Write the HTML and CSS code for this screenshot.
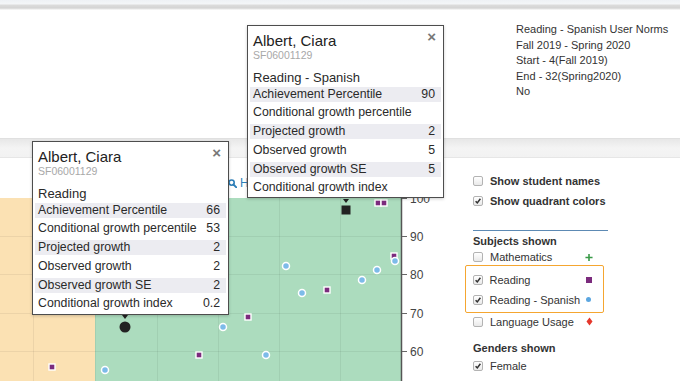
FILE: index.html
```html
<!DOCTYPE html>
<html>
<head>
<meta charset="utf-8">
<link rel="stylesheet" href="styles.css">
</head>
<body>
<div class="page">
  <div class="topstrip"></div>
  <section class="summary">
    <div>Reading - Spanish User Norms</div>
    <div>Fall 2019 - Spring 2020</div>
    <div>Start - 4(Fall 2019)</div>
    <div>End - 32(Spring2020)</div>
    <div>No</div>
  </section>
  <div class="band"></div>
  <main class="main">
    <div class="chart-col">
      <div class="toolbar">
        <a class="zoom-link"><svg width="9" height="9" viewBox="0 0 9 9"><circle cx="3.6" cy="3.6" r="2.6" fill="none" stroke="#2e7fb8" stroke-width="1.6"/><line x1="5.5" y1="5.5" x2="8.3" y2="8.3" stroke="#2e7fb8" stroke-width="1.8" stroke-linecap="round"/></svg><span class="zoom-text">H</span></a>
      </div>
      <svg class="plot" width="440" height="183" viewBox="0 0 440 183">
        <rect x="0" y="0" width="95" height="183" fill="#fbe1b3"/>
        <rect x="95" y="0" width="306" height="183" fill="#acdcbe"/>
        <g stroke="#000" stroke-opacity="0.06" stroke-width="1">
          <line x1="33.5" y1="0" x2="33.5" y2="183"/>
          <line x1="95.5" y1="0" x2="95.5" y2="183"/>
          <line x1="157.5" y1="0" x2="157.5" y2="183"/>
          <line x1="218.5" y1="0" x2="218.5" y2="183"/>
          <line x1="279.5" y1="0" x2="279.5" y2="183"/>
          <line x1="340.5" y1="0" x2="340.5" y2="183"/>
          <line x1="0" y1="38.5" x2="401" y2="38.5"/>
          <line x1="0" y1="76.5" x2="401" y2="76.5"/>
          <line x1="0" y1="115.5" x2="401" y2="115.5"/>
          <line x1="0" y1="153.5" x2="401" y2="153.5"/>
        </g>
        <line x1="401.5" y1="0" x2="401.5" y2="183" stroke="#555" stroke-width="1.5"/>
        <g stroke="#666" stroke-width="1">
          <line x1="402" y1="0.5" x2="407" y2="0.5"/>
          <line x1="402" y1="38.5" x2="407" y2="38.5"/>
          <line x1="402" y1="76.5" x2="407" y2="76.5"/>
          <line x1="402" y1="115.5" x2="407" y2="115.5"/>
          <line x1="402" y1="153.5" x2="407" y2="153.5"/>
        </g>
        <g font-family="Liberation Sans, Arial, sans-serif" font-size="12" fill="#444">
          <text x="410" y="4.5">100</text>
          <text x="410" y="42.5">90</text>
          <text x="410" y="80.5">80</text>
          <text x="410" y="119.5">70</text>
          <text x="410" y="157.5">60</text>
        </g>
        <g fill="#7b2b7d" stroke="#fff" stroke-width="1.4">
          <rect x="375" y="2" width="6" height="6"/>
          <rect x="381" y="2" width="6" height="6"/>
          <rect x="391" y="55" width="6" height="6"/>
          <rect x="324" y="89" width="6" height="6"/>
          <rect x="245" y="116" width="6" height="6"/>
          <rect x="196" y="154" width="6" height="6"/>
          <rect x="49" y="166" width="6" height="6"/>
        </g>
        <g fill="#7dbbe9" stroke="#fff" stroke-width="1.5">
          <circle cx="286" cy="68" r="3.5"/>
          <circle cx="302" cy="95" r="3.5"/>
          <circle cx="362" cy="82" r="3.5"/>
          <circle cx="377" cy="72" r="3.5"/>
          <circle cx="395" cy="63" r="3.5"/>
          <circle cx="266" cy="157" r="3.5"/>
          <circle cx="223" cy="129" r="3.5"/>
          <circle cx="105" cy="172" r="3.5"/>
        </g>
        <rect x="341.5" y="7.5" width="9" height="9" fill="#222"/>
        <circle cx="125" cy="129" r="5.5" fill="#222"/>
        <polygon points="343,1 349,1 346,5" fill="#222"/>
        <polygon points="122,117 128,117 125,121" fill="#222"/>
      </svg>
    </div>
    <aside class="legend">
      <div class="opt"><span class="cb"></span>Show student names</div>
      <div class="opt"><span class="cb"><svg width="8" height="8" viewBox="0 0 8 8"><path d="M1.6 4.2 L3.3 5.9 L6.4 1.8" fill="none" stroke="#333" stroke-width="1.5"/></svg></span>Show quadrant colors</div>
      <div class="rule"></div>
      <div class="heading">Subjects shown</div>
      <div class="item math"><span class="cb"></span><span class="label">Mathematics</span><span class="sym"><svg width="9" height="9" viewBox="0 0 9 9"><path d="M4.5 0.5 V8.5 M0.5 4.5 H8.5" stroke="#3a9a48" stroke-width="1.8"/></svg></span></div>
      <div class="hl">
        <div class="item"><span class="cb"><svg width="8" height="8" viewBox="0 0 8 8"><path d="M1.6 4.2 L3.3 5.9 L6.4 1.8" fill="none" stroke="#333" stroke-width="1.5"/></svg></span><span class="label">Reading</span><span class="sym"><span class="sq"></span></span></div>
        <div class="item"><span class="cb"><svg width="8" height="8" viewBox="0 0 8 8"><path d="M1.6 4.2 L3.3 5.9 L6.4 1.8" fill="none" stroke="#333" stroke-width="1.5"/></svg></span><span class="label">Reading - Spanish</span><span class="sym"><span class="dot"></span></span></div>
      </div>
      <div class="item lang"><span class="cb"></span><span class="label">Language Usage</span><span class="sym"><svg width="7" height="9" viewBox="0 0 7 9"><polygon points="3.5,0.5 6.5,4.5 3.5,8.5 0.5,4.5" fill="#e5372c"/></svg></span></div>
      <div class="heading genders">Genders shown</div>
      <div class="item female"><span class="cb"><svg width="8" height="8" viewBox="0 0 8 8"><path d="M1.6 4.2 L3.3 5.9 L6.4 1.8" fill="none" stroke="#333" stroke-width="1.5"/></svg></span><span class="label">Female</span></div>
    </aside>
  </main>

  <div class="popup popup-top">
    <span class="close">×</span>
    <div class="pname">Albert, Ciara</div>
    <div class="pid">SF06001129</div>
    <div class="psubj">Reading - Spanish</div>
    <div class="prow shade"><span>Achievement Percentile</span><span>90</span></div>
    <div class="prow"><span>Conditional growth percentile</span><span></span></div>
    <div class="prow shade"><span>Projected growth</span><span>2</span></div>
    <div class="prow"><span>Observed growth</span><span>5</span></div>
    <div class="prow shade"><span>Observed growth SE</span><span>5</span></div>
    <div class="prow"><span>Conditional growth index</span><span></span></div>
  </div>

  <div class="popup popup-left">
    <span class="close">×</span>
    <div class="pname">Albert, Ciara</div>
    <div class="pid">SF06001129</div>
    <div class="psubj">Reading</div>
    <div class="prow shade"><span>Achievement Percentile</span><span>66</span></div>
    <div class="prow"><span>Conditional growth percentile</span><span>53</span></div>
    <div class="prow shade"><span>Projected growth</span><span>2</span></div>
    <div class="prow"><span>Observed growth</span><span>2</span></div>
    <div class="prow shade"><span>Observed growth SE</span><span>2</span></div>
    <div class="prow"><span>Conditional growth index</span><span>0.2</span></div>
  </div>
</div>
</body>
</html>
```

FILE: styles.css
```css
html, body {
  margin: 0;
  padding: 0;
}
body {
  font-family: "Liberation Sans", Arial, sans-serif;
  color: #333;
  background: #fff;
}
.page {
  position: relative;
  width: 680px;
  height: 381px;
  overflow: hidden;
  background: #fff;
}
.topstrip {
  height: 10px;
  background: linear-gradient(#eef1f5 0, #f4f6f8 4px, #dcdcdc 5px, #d4d4d4 8px, #e8e8e8 9px, #fdfdfd 10px);
}
.summary {
  height: 128px;
  box-sizing: border-box;
  padding: 12.3px 0 0 516px;
  font-size: 11px;
  line-height: 15.4px;
  color: #333;
}
.band {
  height: 18px;
  border-top: 1px solid #e0e0e0;
  border-bottom: 1px solid #e6e6e6;
  background: linear-gradient(#e7e7e7, #f4f4f4 50%, #f2f2f2);
}
.main {
  display: flex;
  height: 223px;
}
.chart-col {
  width: 465px;
  flex: none;
  display: flex;
  flex-direction: column;
}
.toolbar {
  height: 40px;
  box-sizing: border-box;
  display: flex;
  align-items: flex-end;
  padding: 0 0 8px 228px;
}
.zoom-link {
  display: flex;
  align-items: center;
  gap: 3px;
  color: #2e7fb8;
  font-size: 12px;
  line-height: 14px;
}
.plot {
  display: block;
  overflow: visible;
}
.legend {
  display: flex;
  flex-direction: column;
  padding: 13px 0 0 8px;
  font-size: 11px;
  color: #333;
}
.cb {
  width: 10px;
  height: 10px;
  box-sizing: border-box;
  border: 1px solid #b3b3b3;
  border-radius: 2px;
  background: linear-gradient(#ffffff, #e9e9e9);
  flex: none;
  display: flex;
  align-items: center;
  justify-content: center;
}
.cb svg {
  display: block;
}
.opt {
  height: 20px;
  display: flex;
  align-items: center;
  gap: 7px;
  font-weight: bold;
  white-space: nowrap;
}
.rule {
  width: 135px;
  margin-top: 19px;
  border-top: 1.5px solid #5d8ab4;
}
.heading {
  margin-top: 3px;
  height: 15px;
  line-height: 15px;
  font-weight: bold;
}
.genders {
  margin-top: 11px;
}
.item {
  display: flex;
  align-items: center;
  width: 120px;
  white-space: nowrap;
}
.item .cb {
  margin-right: 7px;
}
.item .label {
  flex: 1;
}
.sym {
  width: 8px;
  flex: none;
  display: flex;
  justify-content: center;
  align-items: center;
}
.sym svg {
  display: block;
}
.sq {
  width: 6px;
  height: 6px;
  background: #7b2b7d;
}
.dot {
  width: 5px;
  height: 5px;
  border-radius: 50%;
  background: #5ba6e0;
}
.math {
  height: 16px;
}
.hl {
  align-self: flex-start;
  margin-left: -8px;
  border: 1.5px solid #f5a630;
  border-radius: 2px;
  padding: 3.5px 10.5px 2.5px 6.5px;
}
.hl .item {
  height: 20px;
}
.lang {
  height: 17px;
}
.female {
  height: 19px;
}
.popup {
  position: absolute;
  width: 197px;
  box-sizing: border-box;
  border: 1px solid #4d4d4d;
  background: #fff;
  padding: 7px 2px 2px;
  box-shadow: 0 1px 3px rgba(0, 0, 0, 0.2);
  color: #2a2a2a;
  z-index: 2;
}
.popup-top {
  left: 247px;
  top: 25px;
  height: 173px;
}
.popup-left {
  left: 32px;
  top: 141px;
  height: 174px;
}
.close {
  position: absolute;
  right: 7px;
  top: 3px;
  font-size: 15px;
  line-height: 15px;
  font-weight: bold;
  color: #777;
}
.pname {
  font-size: 15px;
  line-height: 16px;
  padding-left: 3px;
  color: #222;
}
.pid {
  font-size: 10.5px;
  line-height: 12px;
  padding-left: 3px;
  color: #a8a8a8;
}
.psubj {
  font-size: 13px;
  line-height: 15px;
  margin-top: 8.6px;
  margin-bottom: 2.1px;
  padding-left: 3px;
}
.prow {
  display: flex;
  justify-content: space-between;
  height: 15px;
  line-height: 15px;
  font-size: 12.3px;
  padding: 0 6px 0 3px;
}
.prow + .prow {
  margin-top: 3.75px;
}
.shade {
  background: #ececf1;
}
```
